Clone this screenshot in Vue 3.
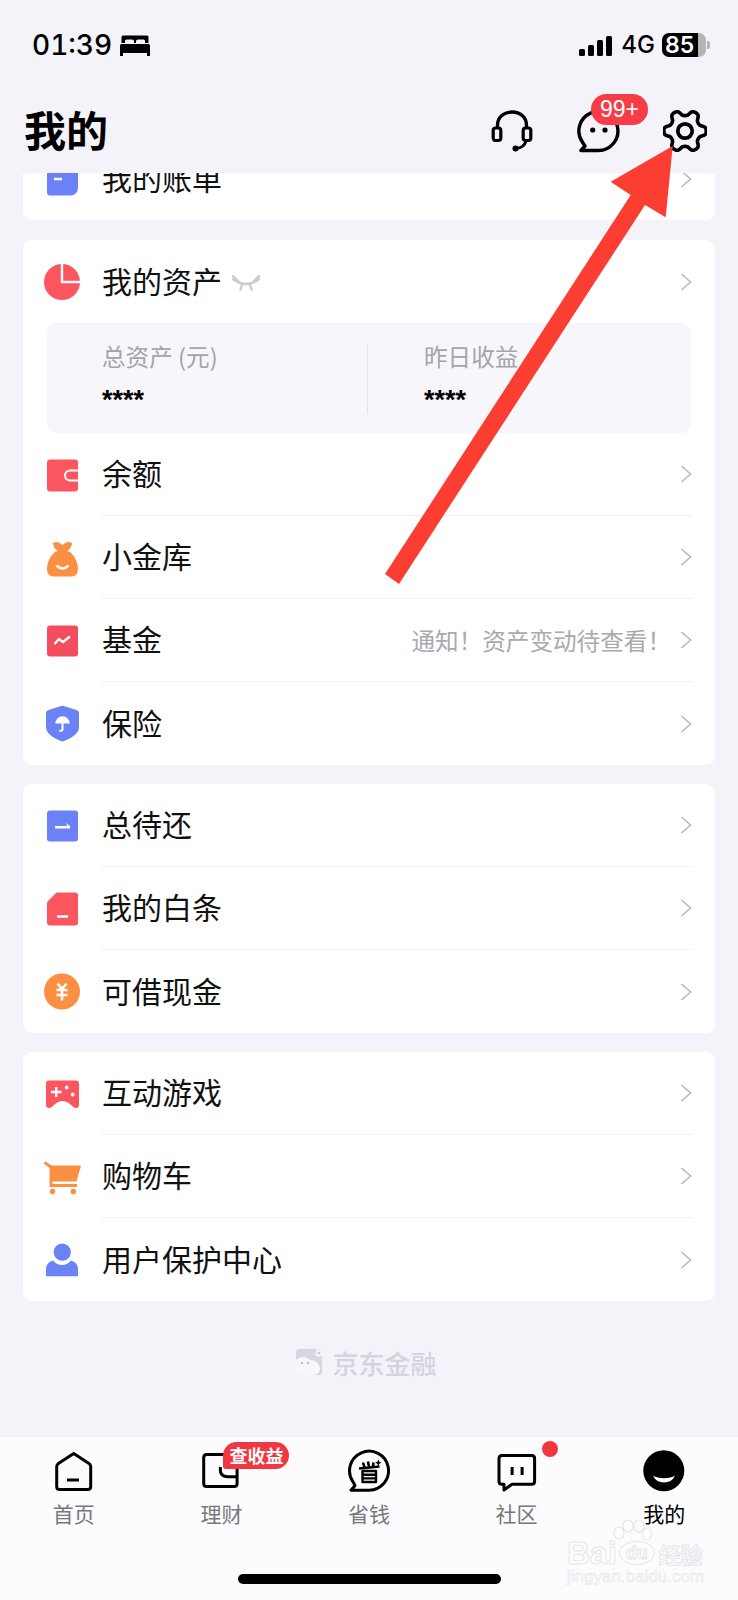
<script setup>
const RED = '#fb5560'
const ORANGE = '#fb9044'
const BLUE = '#6a82f6'
const W = '#fff'
const circle = (cx, cy, r) => `M${cx - r} ${cy}a${r} ${r} 0 1 0 ${r * 2} 0a${r} ${r} 0 1 0 ${-r * 2} 0Z`

const icons = {
  bill: [
    { d: 'M4 0H35V28Q35 36.5 27 36.5H7Q4 36.5 4 33.5Z', fill: BLUE },
    { d: 'M11 20H19', stroke: W, sw: 2.5 }
  ],
  pie: [
    { d: circle(19, 20, 18), fill: RED },
    { d: 'M19 1V20H38', stroke: W, sw: 2.4 }
  ],
  wallet: [
    { d: 'M7 4.5H32Q35 4.5 35 7.5V33.5Q35 36.5 32 36.5H7Q4 36.5 4 33.5V7.5Q4 4.5 7 4.5Z', fill: RED },
    { d: 'M35 15.5H27a5 5 0 0 0 0 10H35', stroke: W, sw: 2 }
  ],
  bag: [
    { d: 'M10 5Q15 2.5 19.5 7Q24 2.5 29 5Q29 10 24 13L27 14C32 18 35 25 35 31Q35 38.5 28 38.5H11Q4 38.5 4 31C4 25 7 18 12 14L15 13Q10 10 10 5Z', fill: ORANGE },
    { d: 'M13.5 27.5Q19.5 33.5 25.5 27.5', stroke: W, sw: 2.5 }
  ],
  fund: [
    { d: 'M7 4.5H32Q35 4.5 35 7.5V32.5Q35 35.5 32 35.5H7Q4 35.5 4 32.5V7.5Q4 4.5 7 4.5Z', fill: '#f34e5d' },
    { d: 'M11.5 23L16 18L20 21L27 15.5', stroke: W, sw: 2.4 }
  ],
  shield: [
    { d: 'M17.5 2.2Q19.5 1.2 21.5 2.2L33.5 6Q36 7 36 9V23Q36 31 21 37Q19.5 37.8 18 37Q3 31 3 23V9Q3 7 5.5 6Z', fill: BLUE },
    { d: 'M12.3 19.5a7.2 7.2 0 0 1 14.4 0Z', fill: W },
    { d: 'M19.5 19V25.2q0 2-3 1.3', stroke: W, sw: 2 }
  ],
  repay: [
    { d: 'M7 4.5H32Q35 4.5 35 7.5V32.5Q35 35.5 32 35.5H7Q4 35.5 4 32.5V7.5Q4 4.5 7 4.5Z', fill: BLUE },
    { d: 'M12 20H24.5L23 17L27 20V22.5H12Z', fill: W }
  ],
  card: [
    { d: 'M14 3.5H32Q35 3.5 35 6.5V33.5Q35 36.5 32 36.5H7Q4 36.5 4 33.5V14Q4 13 5 12L13 4Q13.5 3.5 14 3.5Z', fill: RED },
    { d: 'M14 27.5H25', stroke: W, sw: 2.5 }
  ],
  yuan: [
    { d: circle(19, 19.5, 18), fill: ORANGE },
    { d: 'M14.5 11.5L19 17L23.5 11.5M13.5 18H24.5M13.5 23H24.5M19 17V28.5', stroke: W, sw: 2.5 }
  ],
  game: [
    { d: 'M6 6.5H33Q36 6.5 36 9.5V31Q36 34 33 34Q31 34 27.5 30.5Q24 27 19.5 27Q15 27 11.5 30.5Q8 34 6 34Q3 34 3 31V9.5Q3 6.5 6 6.5Z', fill: RED },
    { d: 'M8 18H18.5M13.2 13V23', stroke: W, sw: 2.4 },
    { d: circle(23.7, 13.5, 1.9) + circle(29.7, 20.5, 1.9), fill: W }
  ],
  cart: [
    { d: 'M1.5 5.5L8 10V28.5H34', stroke: ORANGE, sw: 3 },
    { d: 'M8 8.5H38L33.5 24.5H8Z', fill: ORANGE },
    { d: circle(9.5, 34.5, 2.8) + circle(30.3, 34.5, 2.8), fill: ORANGE }
  ],
  user: [
    { d: circle(19.3, 12.2, 8.6), fill: BLUE },
    { d: 'M3 36.2V29Q3 22.5 10 20.5Q14 25 19 25Q24 25 28 20.5Q35 22.5 35 29V36.2Z', fill: BLUE }
  ]
}

const assets = [
  { icon: 'wallet', label: '余额' },
  { icon: 'bag', label: '小金库' },
  { icon: 'fund', label: '基金', note: '通知！资产变动待查看！' },
  { icon: 'shield', label: '保险' }
]
const groups = [
  [
    { icon: 'repay', label: '总待还' },
    { icon: 'card', label: '我的白条' },
    { icon: 'yuan', label: '可借现金' }
  ],
  [
    { icon: 'game', label: '互动游戏' },
    { icon: 'cart', label: '购物车' },
    { icon: 'user', label: '用户保护中心' }
  ]
]

const tabs = [
  {
    label: '首页',
    shapes: [
      { d: 'M21.7 5.5L37 15.5Q38.7 16.7 38.7 18.5V38.5Q38.7 41.5 35.7 41.5H7.7Q4.7 41.5 4.7 38.5V18.5Q4.7 16.7 6.4 15.5Z', stroke: '#000', sw: 3 },
      { d: 'M15 32H27', stroke: '#000', sw: 3 }
    ]
  },
  {
    label: '理财',
    badge: '查收益',
    shapes: [
      { d: 'M7.7 6.5H35.1Q38.1 6.5 38.1 9.5V35.5Q38.1 38.5 35.1 38.5H7.7Q4.7 38.5 4.7 35.5V9.5Q4.7 6.5 7.7 6.5Z', stroke: '#000', sw: 3 },
      { d: 'M21.5 19Q20 28.7 29 28.7H38', stroke: '#000', sw: 3 }
    ]
  },
  {
    label: '省钱',
    shapes: [
      { d: 'M22 42.2A19.5 19.5 0 1 0 6 33.8L8 37.5L4 42.2Z', stroke: '#000', sw: 3 },
      { d: 'M15.5 23H29V34H15.5ZM15.5 26.8H29M15.5 30.4H29', stroke: '#000', sw: 2.4 },
      { d: 'M12 20.5L32.5 18.5', stroke: '#000', sw: 2.6 },
      { d: 'M16 14.5L17.5 19.5M21 13.5L22 19M26.5 14.5L26 18.5', stroke: '#000', sw: 2.6 },
      { d: 'M31.3 11.5L32.3 13.7L34.5 14.7L32.3 15.7L31.3 17.9L30.3 15.7L28.1 14.7L30.3 13.7Z', fill: '#000' }
    ]
  },
  {
    label: '社区',
    dot: true,
    shapes: [
      { d: 'M7 7.5H36.6Q39.6 7.5 39.6 10.5V33.2Q39.6 36.2 36.6 36.2H17L9 42V36.2H7Q4 36.2 4 33.2V10.5Q4 7.5 7 7.5Z', stroke: '#000', sw: 3 },
      { d: 'M17.1 19V27M27.1 19V27', stroke: '#000', sw: 3 }
    ]
  },
  {
    label: '我的',
    active: true,
    shapes: [
      { d: circle(21.8, 22.7, 20.5), fill: '#000' },
      { d: 'M11 27.5Q15 30.2 22 30.2Q29 30.2 33 27.5Q30 34.5 22 34.5Q14 34.5 11 27.5Z', fill: W }
    ]
  }
]

const gearPath = (() => {
  const pts = []
  const k = Math.tanh(1.6)
  for (let i = 0; i < 180; i++) {
    const a = (i / 180) * Math.PI * 2
    const r = 18.3 + 2.9 * (Math.tanh(1.6 * Math.cos(6 * a)) / k)
    pts.push(`${(22 + r * Math.cos(a)).toFixed(2)} ${(21 + r * Math.sin(a)).toFixed(2)}`)
  }
  return 'M' + pts.join('L') + 'Z'
})()
</script>

<template>
  <div class="page">
    <header class="top">
      <div class="status">
        <div class="status-left">
          <span class="time">01:39</span>
          <svg class="bed" width="30" height="21" viewBox="0 0 30 21">
            <path d="M3 0.5H27Q28.5 0.5 28.5 2V8H25V6Q25 4.5 23.5 4.5H18Q16 4.5 16 6V8H14V6Q14 4.5 12 4.5H6.5Q5 4.5 5 6V8H1.5V2Q1.5 0.5 3 0.5Z" fill="#000" />
            <path d="M0 10.5Q0 9 1.5 9H28.5Q30 9 30 10.5V21H27V18H3V21H0Z" fill="#000" />
          </svg>
        </div>
        <div class="status-right">
          <div class="signal">
            <i class="b1"></i><i class="b2"></i><i class="b3"></i><i class="b4"></i>
          </div>
          <span class="net">4G</span>
          <div class="battery">
            <div class="level"><span>85</span></div>
            <div class="nub"></div>
          </div>
        </div>
      </div>
      <div class="nav">
        <h1 class="title">我的</h1>
        <div class="nav-icons">
          <svg class="ni" width="42" height="42" viewBox="0 0 42 42" fill="none" stroke="#000">
            <path d="M6.5 18V15.5C6.5 7 13 2 21 2S35.5 7 35.5 15.5V18" stroke-width="3.4" />
            <rect x="2.2" y="18" width="7.6" height="12.5" rx="2.5" stroke-width="3.2" />
            <rect x="32.2" y="18" width="7.6" height="12.5" rx="2.5" stroke-width="3.2" />
            <path d="M35 31C34 35 30 38 25 38.5" stroke-width="3" />
            <circle cx="24.5" cy="38.5" r="3" fill="#000" stroke="none" />
          </svg>
          <div class="chat">
            <svg width="44" height="44" viewBox="0 0 44 44" fill="none">
              <path d="M22.5 40.5A19.5 19.5 0 1 0 6.5 32.3L9 36L5 40.5Z" stroke="#000" stroke-width="3.4" stroke-linejoin="round" />
              <circle cx="16.7" cy="20" r="2.6" fill="#000" />
              <circle cx="29" cy="20" r="2.6" fill="#000" />
            </svg>
            <span class="chat-badge">99+</span>
          </div>
          <svg class="ni" width="44" height="42" viewBox="0 0 44 42" fill="none" stroke="#000">
            <path :d="gearPath" stroke-width="3.6" stroke-linejoin="round" />
            <circle cx="22" cy="21" r="7.2" stroke-width="3.8" />
          </svg>
        </div>
      </div>
    </header>

    <main class="scroll">
      <div class="scroll-inner">
        <section class="card">
          <div class="row">
            <svg class="ic" width="40" height="40" viewBox="0 0 40 40" fill="none">
              <path v-for="(s, i) in icons.bill" :key="i" :d="s.d" :fill="s.fill || 'none'" :stroke="s.stroke" :stroke-width="s.sw" />
            </svg>
            <div class="body last">
              <span class="label">我的账单</span>
              <svg class="chev" width="12" height="20" viewBox="0 0 12 20" fill="none"><path d="M1.5 2L10.5 10L1.5 18" stroke="#b9b9be" stroke-width="1.6" /></svg>
            </div>
          </div>
        </section>

        <section class="card">
          <div class="row">
            <svg class="ic" width="40" height="40" viewBox="0 0 40 40" fill="none">
              <path v-for="(s, i) in icons.pie" :key="i" :d="s.d" :fill="s.fill || 'none'" :stroke="s.stroke" :stroke-width="s.sw" />
            </svg>
            <div class="body last">
              <span class="label">我的资产</span>
              <svg class="eye" width="30" height="18" viewBox="0 0 30 18" fill="none" stroke="#cbcbce" stroke-width="2.4" stroke-linecap="round">
                <path d="M2 4Q15 14 28 4M2 1L7 6M28 1L23 6M11 9.5L9.5 14.5M19 9.5L20.5 14.5" />
              </svg>
              <svg class="chev" width="12" height="20" viewBox="0 0 12 20" fill="none"><path d="M1.5 2L10.5 10L1.5 18" stroke="#b9b9be" stroke-width="1.6" /></svg>
            </div>
          </div>
          <div class="panel">
            <div class="col col-a">
              <div class="p-label">总资产 (元)</div>
              <div class="p-val">****</div>
            </div>
            <div class="col col-b">
              <div class="p-label">昨日收益</div>
              <div class="p-val">****</div>
            </div>
          </div>
          <div v-for="(r, n) in assets" :key="r.label" class="row">
            <svg class="ic" width="40" height="40" viewBox="0 0 40 40" fill="none">
              <path v-for="(s, i) in icons[r.icon]" :key="i" :d="s.d" :fill="s.fill || 'none'" :stroke="s.stroke" :stroke-width="s.sw" />
            </svg>
            <div class="body" :class="{ last: n === assets.length - 1 }">
              <span class="label">{{ r.label }}</span>
              <span v-if="r.note" class="note">{{ r.note }}</span>
              <svg class="chev" width="12" height="20" viewBox="0 0 12 20" fill="none"><path d="M1.5 2L10.5 10L1.5 18" stroke="#b9b9be" stroke-width="1.6" /></svg>
            </div>
          </div>
        </section>

        <section v-for="(g, k) in groups" :key="k" class="card">
          <div v-for="(r, n) in g" :key="r.label" class="row">
            <svg class="ic" width="40" height="40" viewBox="0 0 40 40" fill="none">
              <path v-for="(s, i) in icons[r.icon]" :key="i" :d="s.d" :fill="s.fill || 'none'" :stroke="s.stroke" :stroke-width="s.sw" />
            </svg>
            <div class="body" :class="{ last: n === g.length - 1 }">
              <span class="label">{{ r.label }}</span>
              <svg class="chev" width="12" height="20" viewBox="0 0 12 20" fill="none"><path d="M1.5 2L10.5 10L1.5 18" stroke="#b9b9be" stroke-width="1.6" /></svg>
            </div>
          </div>
        </section>

        <div class="brand">
          <svg width="28" height="28" viewBox="0 0 28 28">
            <path d="M4 1H24Q27 1 27 4V24Q27 27 24 27H4Q1 27 1 24V4Q1 1 4 1Z" fill="#d6d6e1" />
            <path d="M1 12Q8 6 15 12Q23 12 25 20Q25 26 18 27H4Q1 27 1 24Z" fill="#f8f8fb" />
            <circle cx="24" cy="5" r="3.6" fill="#f8f8fb" />
            <circle cx="24" cy="5" r="1.5" fill="#c9c9d6" />
            <circle cx="7" cy="15" r="1.3" fill="#c4c4d0" />
            <circle cx="13" cy="15" r="1.3" fill="#c4c4d0" />
          </svg>
          <span>京东金融</span>
        </div>
      </div>
    </main>

    <nav class="tabbar">
      <div class="tabs">
        <div v-for="t in tabs" :key="t.label" class="tab" :class="{ active: t.active }">
          <div class="tab-ic">
            <svg width="44" height="44" viewBox="0 0 44 44" fill="none" stroke-linejoin="round">
              <path v-for="(s, i) in t.shapes" :key="i" :d="s.d" :fill="s.fill || 'none'" :stroke="s.stroke" :stroke-width="s.sw" />
            </svg>
            <span v-if="t.badge" class="tab-badge">{{ t.badge }}</span>
            <i v-if="t.dot" class="tab-dot"></i>
          </div>
          <span class="tab-label">{{ t.label }}</span>
        </div>
      </div>
      <div class="home-bar"></div>
    </nav>

    <svg class="arrow" width="738" height="600" viewBox="0 0 738 600">
      <path d="M672.7 146L610.7 181.7L630.7 195L385 574L399 584L645 205L665.7 217.3Z" fill="#fb3d32" />
    </svg>

    <div class="mark">
      <svg class="paw" width="40" height="30" viewBox="0 0 40 30" fill="#fdfdff" stroke="#e6e6eb" stroke-width="1.2">
        <ellipse cx="7" cy="13" rx="5" ry="6" />
        <ellipse cx="16" cy="6" rx="5" ry="6" />
        <ellipse cx="27" cy="6" rx="5" ry="6" />
        <ellipse cx="35" cy="14" rx="4.5" ry="6" />
      </svg>
      <div class="mark-row">
        <span class="bai">Bai</span>
        <span class="du">du</span>
        <span class="jy">经验</span>
      </div>
      <div class="mark-url">jingyan.baidu.com</div>
    </div>
  </div>
</template>

<style scoped>
.page {
  position: relative;
  width: 738px;
  height: 1600px;
  overflow: hidden;
  display: flex;
  flex-direction: column;
  background: #f3f3f9;
  color: #000;
  font-family: "Noto Sans CJK SC", "Liberation Sans", sans-serif;
}
.top {
  height: 173px;
  flex: none;
}
.status {
  height: 90px;
  box-sizing: border-box;
  padding: 28px 28px 0 32px;
  display: flex;
  justify-content: space-between;
  align-items: flex-start;
}
.status-left {
  display: flex;
  align-items: center;
  height: 34px;
}
.time {
  font-family: Inter, "Liberation Sans", sans-serif;
  font-size: 28px;
  font-weight: 500;
  font-variant-numeric: tabular-nums;
  line-height: 34px;
}
.bed {
  margin-left: 8px;
}
.status-right {
  display: flex;
  align-items: center;
  height: 34px;
}
.signal {
  display: flex;
  align-items: flex-end;
  gap: 3px;
  height: 20px;
  margin-top: 1px;
}
.signal i {
  display: block;
  width: 6px;
  background: #000;
  border-radius: 1.5px;
}
.b1 { height: 7px; }
.b2 { height: 11px; }
.b3 { height: 16px; }
.b4 { height: 20px; }
.net {
  font-family: Inter, "Liberation Sans", sans-serif;
  font-size: 24px;
  font-weight: 500;
  line-height: 34px;
  margin-left: 9px;
}
.battery {
  display: flex;
  align-items: center;
  margin-left: 7px;
}
.level {
  width: 44px;
  height: 24px;
  border-radius: 7px;
  background: linear-gradient(90deg, #000 0 36px, #b5b5b8 36px);
  box-sizing: border-box;
  padding-left: 3px;
  color: #fff;
  font-family: Inter, "Liberation Sans", sans-serif;
  font-size: 23px;
  font-weight: 600;
  line-height: 24px;
}
.nub {
  width: 3px;
  height: 8px;
  margin-left: 1px;
  border-radius: 0 2px 2px 0;
  background: #b5b5b8;
}
.nav {
  height: 83px;
  box-sizing: border-box;
  padding: 18px 31px 0 24px;
  display: flex;
  justify-content: space-between;
  align-items: flex-start;
}
.title {
  margin: 0;
  font-size: 42px;
  font-weight: 700;
  line-height: 42px;
}
.nav-icons {
  display: flex;
  gap: 43px;
  align-items: flex-start;
  margin-top: 2px;
}
.ni {
  display: block;
}
.chat {
  position: relative;
  width: 44px;
  height: 42px;
}
.chat svg {
  display: block;
}
.chat-badge {
  position: absolute;
  left: 15px;
  top: -16px;
  width: 57px;
  height: 31px;
  border-radius: 16px;
  background: #f63c46;
  color: #fff;
  text-align: center;
  font-family: "Liberation Sans", sans-serif;
  font-size: 23px;
  line-height: 31px;
}
.scroll {
  flex: 1;
  min-height: 0;
  overflow: hidden;
  padding: 0 23px;
}
.scroll-inner {
  margin-top: -36px;
}
.card {
  background: #fff;
  border-radius: 9px;
  margin-bottom: 19px;
  overflow: hidden;
}
.card:first-child {
  margin-bottom: 20px;
}
.row {
  display: flex;
  align-items: center;
  height: 83px;
  padding: 0 23px 0 20px;
}
.ic {
  flex: none;
  display: block;
  margin-right: 19px;
}
.body {
  flex: 1;
  height: 100%;
  display: flex;
  align-items: center;
  border-bottom: 1px solid #f0f0f3;
  box-sizing: border-box;
}
.body.last {
  border-bottom: 0;
}
.label {
  font-size: 30px;
  line-height: 40px;
  margin-bottom: 4px;
  color: #111;
}
.eye {
  margin-left: 9px;
  margin-top: 5px;
}
.note {
  margin-left: auto;
  margin-right: 9px;
  font-size: 23.6px;
  color: #a9a9af;
}
.chev {
  margin-left: auto;
  flex: none;
}
.note + .chev {
  margin-left: 0;
}
.panel {
  margin: 0 24px;
  height: 110px;
  box-sizing: border-box;
  background: #f7f7fb;
  border-radius: 9px;
  display: flex;
  padding-top: 20px;
}
.col {
  height: 71px;
}
.col-a {
  width: 321px;
  box-sizing: border-box;
  padding-left: 55px;
  border-right: 1px solid #e6e6ea;
}
.col-b {
  padding-left: 56px;
}
.p-label {
  font-size: 23.6px;
  line-height: 28px;
  margin-top: -1px;
  color: #a4a4aa;
}
.p-val {
  margin-top: 16px;
  font-family: "Liberation Sans", sans-serif;
  font-size: 27px;
  font-weight: 700;
  line-height: 28px;
  color: #000;
}
.brand {
  margin-top: 46px;
  height: 30px;
  display: flex;
  align-items: center;
  justify-content: center;
  gap: 9px;
  padding-right: 6px;
  font-size: 26px;
  font-weight: 500;
  color: #d4d4e0;
}
.tabbar {
  flex: none;
  height: 163px;
  box-sizing: border-box;
  background: #fcfcfe;
  padding-top: 11px;
}
.tabs {
  display: flex;
}
.tab {
  flex: 1;
  display: flex;
  flex-direction: column;
  align-items: center;
  color: #77777b;
}
.tab.active {
  color: #000;
}
.tab-ic {
  position: relative;
  width: 44px;
  height: 44px;
}
.tab-ic svg {
  display: block;
}
.tab-label {
  margin-top: 7px;
  font-size: 21px;
  line-height: 28px;
}
.tab-badge {
  position: absolute;
  left: 24px;
  top: -6px;
  width: 66px;
  height: 27px;
  border-radius: 14px 14px 14px 3px;
  background: #f1373f;
  color: #fff;
  text-align: center;
  font-size: 18px;
  font-weight: 700;
  line-height: 27px;
  white-space: nowrap;
}
.tab-dot {
  position: absolute;
  left: 47px;
  top: -7px;
  width: 16px;
  height: 16px;
  border-radius: 50%;
  background: #f2353f;
}
.home-bar {
  width: 263px;
  height: 10px;
  margin: 47px auto 0;
  border-radius: 5px;
  background: #000;
}
.arrow {
  position: absolute;
  left: 0;
  top: 0;
  pointer-events: none;
}
.mark {
  position: absolute;
  left: 567px;
  top: 1520px;
  width: 134px;
  height: 66px;
}
.paw {
  position: absolute;
  left: 45px;
  top: 0;
}
.mark-row {
  position: absolute;
  left: 0;
  top: 17px;
  display: flex;
  align-items: center;
  height: 32px;
  white-space: nowrap;
  font-family: "Liberation Sans", sans-serif;
  color: #fdfdff;
  -webkit-text-stroke: 1px #e6e6eb;
}
.bai {
  font-size: 32px;
  font-weight: 700;
}
.du {
  margin-left: 2px;
  width: 36px;
  height: 24px;
  text-align: center;
  border-radius: 50%;
  border: 1px solid #e6e6eb;
  box-sizing: border-box;
  font-size: 18px;
  font-weight: 700;
  line-height: 22px;
}
.jy {
  margin-left: 4px;
  font-family: "Noto Sans CJK SC", sans-serif;
  font-size: 22px;
  font-weight: 700;
}
.mark-url {
  position: absolute;
  left: 0;
  top: 47px;
  font-family: "Liberation Sans", sans-serif;
  font-size: 17px;
  line-height: 20px;
  color: #fdfdff;
  -webkit-text-stroke: 0.6px #e6e6eb;
  white-space: nowrap;
}
</style>
